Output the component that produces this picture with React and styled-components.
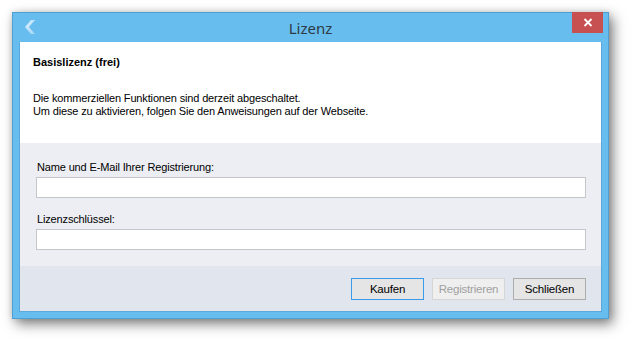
import React from "react";
import styled, { createGlobalStyle } from "styled-components";

const Global = createGlobalStyle`
  html, body { margin: 0; padding: 0; background: #ffffff; }
  body { font-family: "Liberation Sans", Arial, sans-serif; }
`;

const Page = styled.div`
  padding: 12px 0 0 12px;
  width: 630px;
  height: 340px;
  box-sizing: border-box;
`;

const Window = styled.div`
  width: 597px;
  height: 307px;
  box-sizing: border-box;
  border: 1px solid #4e9fd6;
  background: #67bdee;
  box-shadow: 4px 5px 12px rgba(0, 0, 0, 0.5), 0 0 6px rgba(0, 0, 0, 0.12);
  display: flex;
  flex-direction: column;
`;

const TitleBar = styled.div`
  position: relative;
  height: 29px;
  flex: none;
  display: flex;
  align-items: center;
  justify-content: center;
`;

const BackButton = styled.div`
  position: absolute;
  left: 9px;
  top: 6px;
  width: 16px;
  height: 16px;
`;

const Title = styled.div`
  font-family: "Noto Sans", "Open Sans", sans-serif;
  font-size: 15px;
  color: #2f3a44;
  padding-top: 1px;
`;

const CloseButton = styled.div`
  position: absolute;
  right: 5px;
  top: -1px;
  width: 31px;
  height: 21px;
  background: #c75050;
  display: flex;
  align-items: center;
  justify-content: center;
`;

const Content = styled.div`
  flex: 1;
  margin: 0 6px 6px 6px;
  border: 1px solid #5aa8dc;
  border-top: none;
  display: flex;
  flex-direction: column;
  font-size: 11px;
  letter-spacing: -0.15px;
  color: #000;
`;

const Header = styled.div`
  background: #ffffff;
  height: 101px;
  box-sizing: border-box;
  padding: 14px 0 0 13px;
`;

const Heading = styled.div`
  font-weight: bold;
  font-size: 11px;
  letter-spacing: 0;
  margin-bottom: 24px;
`;

const Paragraph = styled.div`
  line-height: 13px;
`;

const Form = styled.div`
  background: #eceef3;
  height: 123px;
  box-sizing: border-box;
  padding: 18px 15px 0 16px;
  display: flex;
  flex-direction: column;
`;

const Label = styled.label`
  display: block;
  margin: 0 0 3px 1px;
  line-height: 13px;
`;

const Input = styled.div`
  height: 21px;
  box-sizing: border-box;
  background: #ffffff;
  border: 1px solid #c4c6ca;
  margin-bottom: ${(p) => p.$gap || 0}px;
`;

const ButtonBar = styled.div`
  flex: 1;
  background: #e1e6ee;
  display: flex;
  justify-content: flex-end;
  align-items: flex-start;
  gap: 8px;
  padding: 12px 15px 0 0;
`;

const Button = styled.div`
  width: 73px;
  height: 22px;
  box-sizing: border-box;
  display: flex;
  align-items: center;
  justify-content: center;
  font-size: 11.5px;
  letter-spacing: -0.2px;
  border: 1px solid ${(p) => (p.$focused ? "#3c9aea" : p.$disabled ? "#d6d6d6" : "#adadad")};
  background: ${(p) => (p.$disabled ? "#efefef" : "#e5e5e5")};
  color: ${(p) => (p.$disabled ? "#a0a0a0" : "#000")};
`;

export default function App() {
  return (
    <>
      <Global />
      <Page>
        <Window>
          <TitleBar>
            <BackButton>
              <svg width="16" height="16" viewBox="0 0 16 16">
                <defs>
                  <linearGradient id="bk" x1="0" y1="0" x2="1" y2="1">
                    <stop offset="0" stopColor="#e2f3ff" />
                    <stop offset="1" stopColor="#9ed3f6" />
                  </linearGradient>
                </defs>
                <polygon points="9,1 13,1 7,8 13,15 9,15 3,8" fill="url(#bk)" />
              </svg>
            </BackButton>
            <Title>Lizenz</Title>
            <CloseButton>
              <svg width="10" height="9" viewBox="0 0 10 9">
                <path d="M1.5 1 L8.5 8 M8.5 1 L1.5 8" stroke="#ffffff" strokeWidth="1.8" />
              </svg>
            </CloseButton>
          </TitleBar>
          <Content>
            <Header>
              <Heading>Basislizenz (frei)</Heading>
              <Paragraph>
                Die kommerziellen Funktionen sind derzeit abgeschaltet.
                <br />
                Um diese zu aktivieren, folgen Sie den Anweisungen auf der Webseite.
              </Paragraph>
            </Header>
            <Form>
              <Label>Name und E-Mail Ihrer Registrierung:</Label>
              <Input $gap={15} />
              <Label>Lizenzschlüssel:</Label>
              <Input />
            </Form>
            <ButtonBar>
              <Button $focused>Kaufen</Button>
              <Button $disabled>Registrieren</Button>
              <Button>Schließen</Button>
            </ButtonBar>
          </Content>
        </Window>
      </Page>
    </>
  );
}
